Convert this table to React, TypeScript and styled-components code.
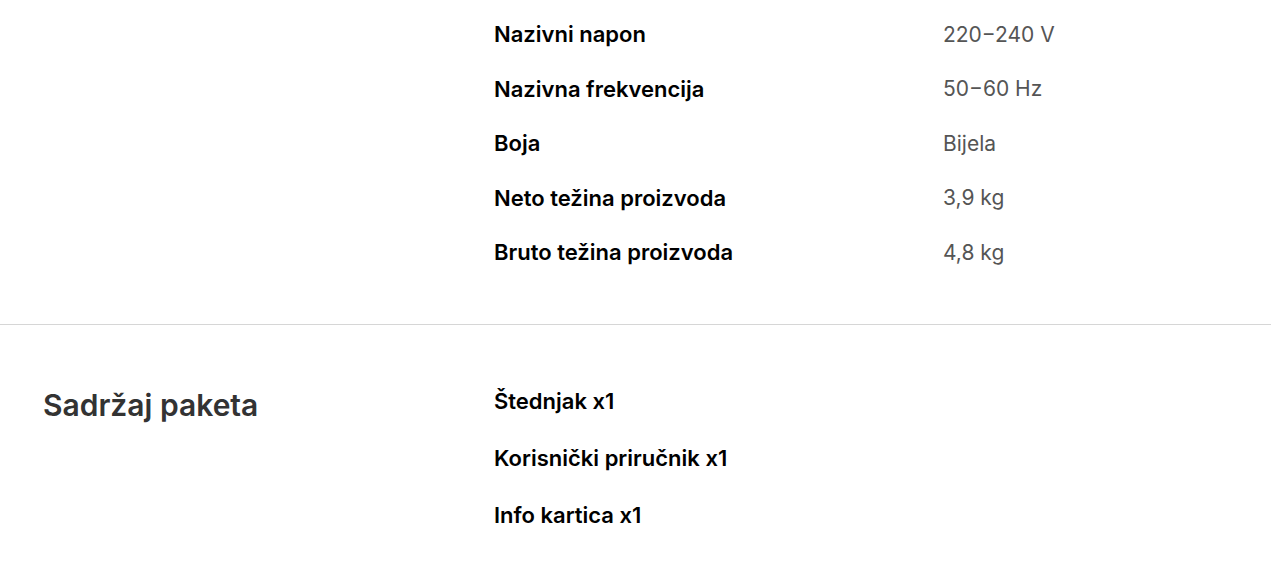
import React from 'react';
import styled, { createGlobalStyle } from 'styled-components';

const GlobalStyle = createGlobalStyle`
  body {
    margin: 0;
    background: #fff;
    font-family: Inter, "Noto Sans", sans-serif;
  }
`;

const Section = styled.section<{ $top: number; $bottom: number }>`
  display: grid;
  grid-template-columns: 451px 1fr;
  padding: ${p => p.$top}px 43px ${p => p.$bottom}px;
`;

const Divider = styled.hr`
  margin: 0;
  border: 0;
  border-top: 1px solid #d6d6d6;
`;

const Heading = styled.h2`
  margin: 0;
  padding-top: 14px;
  font-size: 30px;
  font-weight: 600;
  color: #333;
  line-height: 36px;
`;

const SpecList = styled.dl`
  margin: 0;
  display: grid;
  grid-template-columns: 449px 1fr;
  grid-auto-rows: 54.5px;
  align-items: center;
`;

const Label = styled.dt`
  font-size: 22px;
  font-weight: 600;
  color: #000;
`;

const Value = styled.dd`
  margin: 0;
  font-size: 21px;
  color: #555;
`;

const ItemList = styled.ul`
  margin: 0;
  padding: 0;
  list-style: none;
  display: grid;
  grid-auto-rows: 57px;
  align-items: center;
`;

const Item = styled.li`
  font-size: 22px;
  font-weight: 600;
  color: #000;
`;

const specs = [
  ['Nazivni napon', '220−240 V'],
  ['Nazivna frekvencija', '50−60 Hz'],
  ['Boja', 'Bijela'],
  ['Neto težina proizvoda', '3,9 kg'],
  ['Bruto težina proizvoda', '4,8 kg'],
];

const contents = ['Štednjak x1', 'Korisnički priručnik x1', 'Info kartica x1'];

const App: React.FC = () => {
  return (
    <>
      <GlobalStyle />
      <Section $top={7} $bottom={44}>
        <div />
        <SpecList>
          {specs.map(([label, value]) => (
            <React.Fragment key={label}>
              <Label>{label}</Label>
              <Value>{value}</Value>
            </React.Fragment>
          ))}
        </SpecList>
      </Section>
      <Divider />
      <Section $top={48} $bottom={20}>
        <Heading>Sadržaj paketa</Heading>
        <ItemList>
          {contents.map(item => (
            <Item key={item}>{item}</Item>
          ))}
        </ItemList>
      </Section>
    </>
  );
};

export default App;
